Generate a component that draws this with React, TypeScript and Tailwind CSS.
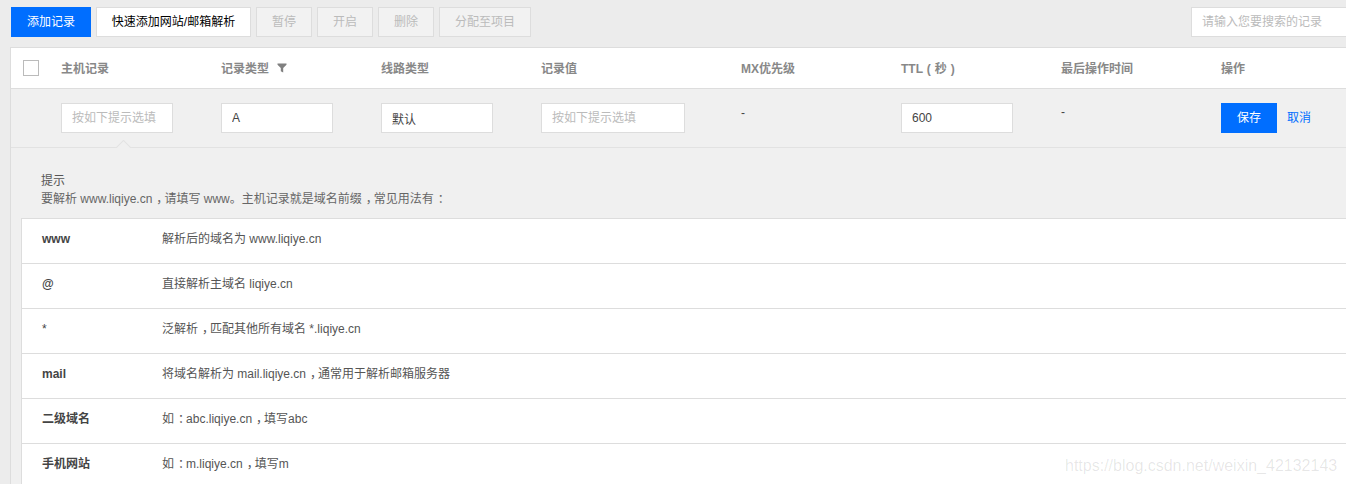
import React from "react";

const font = "font-['Liberation_Sans','Noto_Sans_CJK_SC',sans-serif]";
const cols = "grid grid-cols-[50px_160px_160px_160px_200px_160px_160px_160px_1fr]";
const field = "h-[30px] border border-[#dddddd] bg-white px-[10px] text-xs text-[#444444] outline-none placeholder:text-[#bbbbbb]";

function ToolButton({ label, w }: { label: string; w: string }) {
  return (
    <button className={`h-[30px] ${w} border border-[#dddddd] bg-[#f2f2f2] text-xs text-[#bbbbbb]`}>{label}</button>
  );
}

function Punct({ text }: { text: string }) {
  const parts = text.split(/([，：])/);
  return (
    <>
      {parts.map((p, i) =>
        p === "，" || p === "：" ? (
          <span key={i} className="pl-[4px] tracking-[-4px]">{p}</span>
        ) : (
          <span key={i}>{p}</span>
        )
      )}
    </>
  );
}

const heads = ["主机记录", "记录类型", "线路类型", "记录值", "MX优先级", "TTL ( 秒 )", "最后操作时间", "操作"];

const rows: [string, string][] = [
  ["www", "解析后的域名为 www.liqiye.cn"],
  ["@", "直接解析主域名 liqiye.cn"],
  ["*", "泛解析，匹配其他所有域名 *.liqiye.cn"],
  ["mail", "将域名解析为 mail.liqiye.cn，通常用于解析邮箱服务器"],
  ["二级域名", "如：abc.liqiye.cn，填写abc"],
  ["手机网站", "如：m.liqiye.cn，填写m"],
];

export default function App() {
  return (
    <div className={`relative h-[484px] w-[1346px] overflow-hidden bg-[#ececec] ${font}`}>
      <div className="flex h-[47px] items-start gap-[5px] pl-[11px] pt-[7px]">
        <button className="h-[30px] w-[80px] bg-[#006eff] text-xs text-white">添加记录</button>
        <button className="h-[30px] w-[155px] border border-[#dddddd] bg-white text-xs text-black">快速添加网站/邮箱解析</button>
        <ToolButton label="暂停" w="w-[56px]" />
        <ToolButton label="开启" w="w-[56px]" />
        <ToolButton label="删除" w="w-[56px]" />
        <ToolButton label="分配至项目" w="w-[92px]" />
        <input
          readOnly
          placeholder="请输入您要搜索的记录"
          className="ml-auto h-[30px] w-[155px] border border-r-0 border-[#dddddd] bg-white px-[10px] text-xs outline-none placeholder:text-[#bbbbbb]"
        />
      </div>

      <div className="ml-[10px] border-l border-t border-[#dddddd] bg-[#f0f0f0]">
        <div className={`${cols} h-[41px] items-center border-b border-[#dddddd] bg-white text-xs font-bold text-[#888888]`}>
          <div className="pl-[12px]">
            <div className="h-4 w-4 border border-[#bbbbbb] bg-white" />
          </div>
          {heads.map((h, i) => (
            <div key={h} className="flex items-center pt-[2px] [word-spacing:0.7px]">
              <span>{h}</span>
              {i === 1 && (
                <svg width="10" height="10" viewBox="0 0 10 10" className="mb-[2px] ml-[8px]">
                  <path d="M0.5 0.5h9v1.2L6.2 5v4.5L3.8 8.2V5L0.5 1.7z" fill="#808080" />
                </svg>
              )}
            </div>
          ))}
        </div>

        <div className={`${cols} relative h-[59px] border-b border-[#e2e2e2] pt-[14px] text-xs text-[#444444]`}>
          <div />
          <div><input readOnly placeholder="按如下提示选填" className={`${field} w-[112px]`} /></div>
          <div><input readOnly value="A" className={`${field} w-[112px]`} /></div>
          <div><input readOnly value="默认" className={`${field} w-[112px]`} /></div>
          <div><input readOnly placeholder="按如下提示选填" className={`${field} w-[144px]`} /></div>
          <div className="pt-[2px]">-</div>
          <div><input readOnly value="600" className={`${field} w-[112px]`} /></div>
          <div className="pt-[1px]">-</div>
          <div className="flex items-start">
            <button className="h-[30px] w-[56px] bg-[#006eff] text-xs text-white">保存</button>
            <span className="ml-[10px] leading-[30px] text-[#006eff]">取消</span>
          </div>
          <div className="absolute bottom-[-6px] left-[107px] h-[11px] w-[11px] rotate-45 border-l border-t border-[#e2e2e2] bg-[#f0f0f0]" />
        </div>

        <div className="pl-[30px] pt-[24px] pb-[10px] text-xs leading-[18px] text-[#666666]">
          <p className="text-[#555555]">提示</p>
          <p><Punct text="要解析 www.liqiye.cn，请填写 www。主机记录就是域名前缀，常见用法有：" /></p>
        </div>

        <div className="ml-[10px] border-l border-t border-[#dddddd] bg-white text-xs">
          {rows.map(([k, v]) => (
            <div key={k} className="flex h-[45px] border-b border-[#dddddd] pt-[12px] leading-[16px]">
              <div className={`w-[140px] pl-[20px] text-[#444444] ${k === "*" ? "font-normal" : "font-bold"}`}>{k}</div>
              <div className="text-[#555555]"><Punct text={v} /></div>
            </div>
          ))}
        </div>
      </div>

      <div className="absolute left-[1065px] top-[454px] text-base text-[#000000]/10">https://blog.csdn.net/weixin_42132143</div>
    </div>
  );
}
